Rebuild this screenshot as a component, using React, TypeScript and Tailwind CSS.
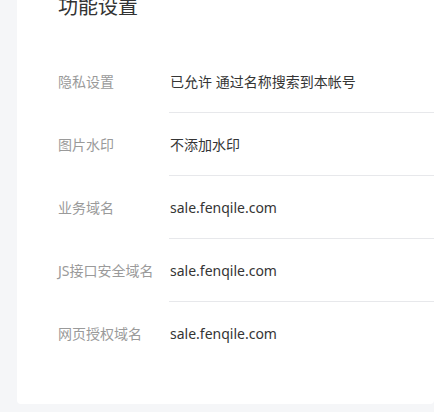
const rows: { label: string; value: string }[] = [
  { label: "隐私设置", value: "已允许 通过名称搜索到本帐号" },
  { label: "图片水印", value: "不添加水印" },
  { label: "业务域名", value: "sale.fenqile.com" },
  { label: "JS接口安全域名", value: "sale.fenqile.com" },
  { label: "网页授权域名", value: "sale.fenqile.com" },
];

export default function App() {
  return (
    <div
      className="h-[412px] overflow-hidden bg-[#f5f6f8] pl-[17px]"
      style={{ fontFamily: '"Noto Sans", "Noto Sans CJK SC", sans-serif' }}
    >
      <div className="rounded-b bg-white pb-[39px] pl-[41px]">
        <h2 className="mt-[-5px] text-[20px] leading-[24px] text-[#333]">功能设置</h2>
        <div className="mt-[31px]">
          {rows.map((r, i) => (
            <div key={r.label} className="flex h-[63px] items-stretch">
              <div className="flex w-[111px] shrink-0 items-center text-[14px] text-[#9a9a9a]">
                {r.label}
              </div>
              <div
                className={
                  "flex flex-1 items-center pl-px text-[14px] text-[#353535] " +
                  (i < rows.length - 1 ? "border-b border-[#e7e8eb]" : "")
                }
              >
                {r.value}
              </div>
            </div>
          ))}
        </div>
      </div>
    </div>
  );
}
